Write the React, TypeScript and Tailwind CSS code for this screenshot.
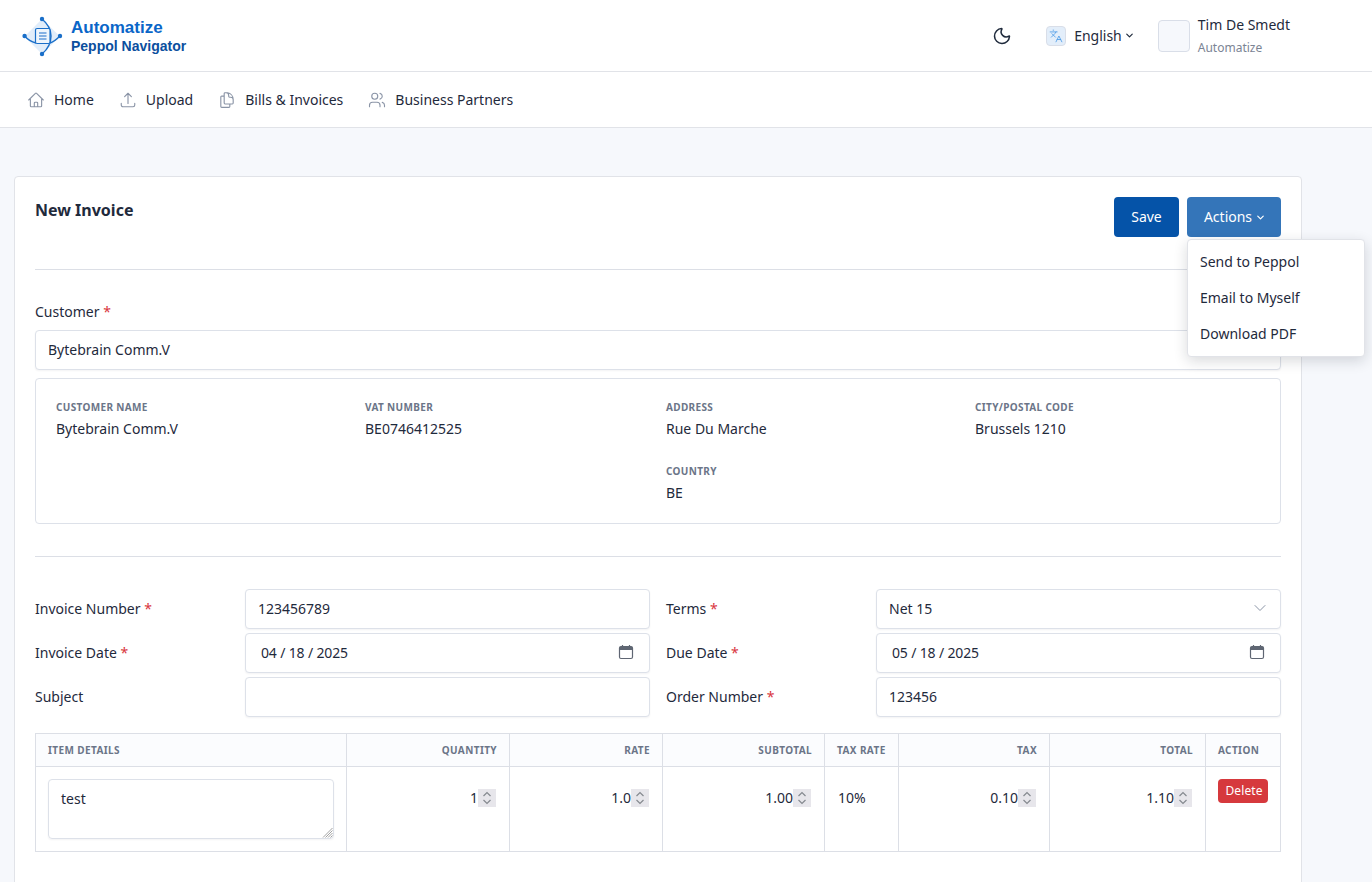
import { Languages, Moon, ChevronDown, Users } from "lucide-react";
import { HiOutlineArrowUpTray, HiOutlineDocumentDuplicate, HiOutlineHome } from "react-icons/hi2";

const field =
  "w-full h-10 px-3 bg-white border border-[#dde1e9] rounded text-sm text-[#1f2a3c] shadow-[0_1px_2px_rgba(16,24,40,0.05)] outline-none";

function Logo() {
  return (
    <svg width="44" height="44" viewBox="0 0 44 44" fill="none">
      <path d="M19 7 Q21 5 23 7 L37 20.5 Q39 22.5 37 24.5 L23 38 Q21 40 19 38 L5.5 24.5 Q3.5 22.5 5.5 20.5 Z" fill="#e1edfa" />
      <path d="M21 5 C27 10 30 16 30 22 C30 29 27 35 21 40" stroke="#1a6fc9" strokeWidth="1.4" />
      <path d="M3.6 22 C7 26 11 28 15 29 M39 22 C35 26 33 28 29 29" stroke="#1a6fc9" strokeWidth="1.4" />
      <rect x="14.5" y="14.5" width="14.5" height="15" rx="1.5" fill="#eef5fc" stroke="#1a6fc9" strokeWidth="1.2" />
      <path d="M18 19h7.5M18 22h7.5M18 25h7.5" stroke="#1a6fc9" strokeWidth="1.2" />
      <circle cx="21" cy="5" r="2.2" fill="#1a6fc9" />
      <circle cx="3.6" cy="22" r="2.2" fill="#1a6fc9" />
      <circle cx="39" cy="22" r="2.2" fill="#1a6fc9" />
      <circle cx="21" cy="40" r="2.2" fill="#1a6fc9" />
    </svg>
  );
}

function CalendarIcon() {
  return (
    <svg width="16" height="16" viewBox="0 0 16 16" fill="none" className="absolute right-[16px] top-[11px]">
      <rect x="1.5" y="2.5" width="13" height="12" rx="1.5" stroke="#5f6673" strokeWidth="1.2" />
      <path d="M1.5 4a1.5 1.5 0 0 1 1.5-1.5h10A1.5 1.5 0 0 1 14.5 4v2h-13Z" fill="#5f6673" />
      <path d="M4.5 1v2M11.5 1v2" stroke="#5f6673" strokeWidth="1.2" />
    </svg>
  );
}

function NavItem({ icon, label }: { icon: React.ReactNode; label: string }) {
  return (
    <a className="flex items-center gap-[9px] text-sm text-[#1f2a3c]">
      <span className="text-[#8a94a6]">{icon}</span>
      {label}
    </a>
  );
}

function Req() {
  return <span className="text-[#d9363e]"> *</span>;
}

function Info({ label, value }: { label: string; value: string }) {
  return (
    <div>
      <div className="text-[10px] leading-[14px] font-bold uppercase tracking-[0.35px] text-[#6b7588]">{label}</div>
      <div className="mt-[5px] text-sm leading-5 text-[#1f2a3c]">{value}</div>
    </div>
  );
}

function FormRow({ label, required, children }: { label: string; required?: boolean; children: React.ReactNode }) {
  return (
    <div className="grid grid-cols-[210px_405px] items-center">
      <label className="text-sm text-[#1f2a3c]">
        {label}
        {required && <Req />}
      </label>
      {children}
    </div>
  );
}

function NumberCell({ value }: { value: string }) {
  return (
    <td className="border border-[#dcdfe6] pl-3 pr-[13px] pt-[22px] align-top">
      <div className="flex items-center h-[18px]">
        <input
          readOnly
          value={value}
          className="min-w-0 flex-1 h-5 text-right text-sm text-[#1f2a3c] bg-transparent outline-none"
        />
        <span className="w-[18px] h-[18px] shrink-0 bg-[#e7e6eb] flex items-center justify-center">
          <svg width="12" height="14" viewBox="0 0 12 14" fill="none" stroke="#85898f" strokeWidth="1.2">
            <path d="M2.5 5 L6 1.5 L9.5 5 M2.5 9 L6 12.5 L9.5 9" />
          </svg>
        </span>
      </div>
    </td>
  );
}

const th = "border border-[#dcdfe6] px-3 h-[33px] text-[10px] font-bold uppercase tracking-[0.4px] text-[#6b7588]";
const input = `${field} pb-0.5`;

export default function App() {
  return (
    <div className="h-screen overflow-hidden bg-[#f6f8fc] font-['Noto_Sans',sans-serif]">
      <header className="h-[72px] bg-white border-b border-[#e1e3e8] flex items-center pl-[21px] pr-[82px]">
        <Logo />
        <div className="ml-[6px] mt-[2px] font-['Liberation_Sans',sans-serif] font-bold">
          <div className="text-[17px] leading-5 text-[#0a66c8]">Automatize</div>
          <div className="text-sm leading-[17px] text-[#0b4f9e]">Peppol Navigator</div>
        </div>
        <Moon size={20} strokeWidth={1.8} className="ml-auto text-[#1f2a3c]" />
        <span className="ml-[34px] w-5 h-5 rounded bg-[#e3eefa] border border-[#d9dee8] flex items-center justify-center text-[#4a9ae8]">
          <Languages size={14} strokeWidth={1.4} />
        </span>
        <span className="ml-[8px] text-sm text-[#1f2a3c]">English</span>
        <ChevronDown size={11} strokeWidth={2.6} className="ml-[2px] text-[#1f2a3c]" />
        <span className="ml-[23px] w-8 h-8 rounded bg-[#f6f8fc] border border-[#d9dee8]" />
        <div className="ml-2">
          <div className="text-sm leading-[19px] text-[#1f2a3c]">Tim De Smedt</div>
          <div className="mt-[5px] text-xs leading-[17px] text-[#7b8494]">Automatize</div>
        </div>
      </header>

      <nav className="h-[56px] bg-white border-b border-[#e1e3e8] flex items-center pl-[27px] gap-[25px]">
        <NavItem icon={<HiOutlineHome size={18} strokeWidth={1.5} />} label="Home" />
        <NavItem icon={<HiOutlineArrowUpTray size={18} strokeWidth={1.5} />} label="Upload" />
        <NavItem icon={<HiOutlineDocumentDuplicate size={18} strokeWidth={1.5} />} label="Bills & Invoices" />
        <NavItem icon={<Users size={18} strokeWidth={1.5} />} label="Business Partners" />
      </nav>

      <main className="pt-12 pl-[14px]">
        <section className="relative w-[1288px] bg-white border border-[#e1e3e8] rounded px-5 pt-5 pb-10">
          <div className="flex justify-between h-[40px]">
            <h1 className="text-base leading-[26px] font-bold text-[#1f2a3c]">New Invoice</h1>
            <div className="flex gap-2">
              <button className="w-[65px] h-10 rounded bg-[#0553a8] text-sm text-white">Save</button>
              <button className="w-[94px] h-10 pl-[2px] rounded bg-[#3475b9] text-sm text-white flex items-center justify-center gap-[3px]">
                Actions <ChevronDown size={11} strokeWidth={2.6} />
              </button>
            </div>
          </div>

          <div className="absolute z-10 left-[1172px] top-[62px] w-[178px] h-[118px] py-1 bg-white border border-[#e1e3e8] rounded shadow-[0_4px_14px_rgba(16,24,40,0.16)]">
            <div className="h-9 pl-3 flex items-center text-sm text-[#1f2a3c]">Send to Peppol</div>
            <div className="h-9 pl-3 flex items-center text-sm text-[#1f2a3c]">Email to Myself</div>
            <div className="h-9 pl-3 flex items-center text-sm text-[#1f2a3c]">Download PDF</div>
          </div>

          <hr className="mt-8 border-[#dcdfe6]" />

          <label className="block mt-[32px] mb-[8px] text-sm leading-5 text-[#1f2a3c]">
            Customer
            <Req />
          </label>
          <input readOnly value="Bytebrain Comm.V" className={input} />

          <div className="mt-2 h-[146px] border border-[#dde1e9] rounded px-5 pt-[21px] grid grid-cols-[309px_301px_309px_1fr] auto-rows-[64px]">
            <Info label="Customer Name" value="Bytebrain Comm.V" />
            <Info label="VAT Number" value="BE0746412525" />
            <Info label="Address" value="Rue Du Marche" />
            <Info label="City/Postal Code" value="Brussels 1210" />
            <div className="col-start-3">
              <Info label="Country" value="BE" />
            </div>
          </div>

          <hr className="mt-8 border-[#dcdfe6]" />

          <div className="mt-8 grid grid-cols-[615px_615px] gap-x-4 gap-y-1">
            <FormRow label="Invoice Number" required>
              <input readOnly value="123456789" className={input} />
            </FormRow>
            <FormRow label="Terms" required>
              <div className="relative">
                <select defaultValue="Net 15" className={`${field} appearance-none`}>
                  <option>Net 15</option>
                </select>
                <ChevronDown size={20} strokeWidth={1.2} className="absolute right-[11px] top-[9px] text-[#8a94a6]" />
              </div>
            </FormRow>
            <FormRow label="Invoice Date" required>
              <div className="relative">
                <input readOnly value="04 / 18 / 2025" className={`${input} pl-[15px] tracking-[-0.15px]`} />
                <CalendarIcon />
              </div>
            </FormRow>
            <FormRow label="Due Date" required>
              <div className="relative">
                <input readOnly value="05 / 18 / 2025" className={`${input} pl-[15px] tracking-[-0.15px]`} />
                <CalendarIcon />
              </div>
            </FormRow>
            <FormRow label="Subject">
              <input readOnly value="" className={input} />
            </FormRow>
            <FormRow label="Order Number" required>
              <input readOnly value="123456" className={input} />
            </FormRow>
          </div>

          <table className="mt-4 w-[1245px] table-fixed border-collapse">
            <colgroup>
              <col className="w-[311px]" />
              <col className="w-[163px]" />
              <col className="w-[153px]" />
              <col className="w-[162px]" />
              <col className="w-[74px]" />
              <col className="w-[151px]" />
              <col className="w-[156px]" />
              <col className="w-[75px]" />
            </colgroup>
            <thead className="bg-[#fbfcfe]">
              <tr>
                <th className={`${th} text-left`}>Item Details</th>
                <th className={`${th} text-right`}>Quantity</th>
                <th className={`${th} text-right`}>Rate</th>
                <th className={`${th} text-right`}>Subtotal</th>
                <th className={`${th} text-left`}>Tax Rate</th>
                <th className={`${th} text-right`}>Tax</th>
                <th className={`${th} text-right`}>Total</th>
                <th className={`${th} text-left`}>Action</th>
              </tr>
            </thead>
            <tbody>
              <tr className="h-[85px]">
                <td className="border border-[#dcdfe6] px-3 pt-3 pb-3 align-top">
                  <div className="relative">
                    <textarea
                      defaultValue="test"
                      className="block w-full h-[60px] px-3 py-[9px] text-sm leading-5 text-[#1f2a3c] border border-[#dde1e9] rounded shadow-[0_1px_2px_rgba(16,24,40,0.05)] outline-none resize-none"
                    />
                    <svg width="11" height="11" viewBox="0 0 11 11" stroke="#8a8a8a" strokeWidth="0.8" className="absolute right-[1px] bottom-[1px] pointer-events-none">
                      <path d="M1 10.5 L10.5 1 M3.5 10.5 L10.5 3.5 M6 10.5 L10.5 6 M8.5 10.5 L10.5 8.5" />
                    </svg>
                  </div>
                </td>
                <NumberCell value="1" />
                <NumberCell value="1.0" />
                <NumberCell value="1.00" />
                <td className="border border-[#dcdfe6] px-[13px] pt-[21px] align-top text-sm leading-5 text-[#1f2a3c]">10%</td>
                <NumberCell value="0.10" />
                <NumberCell value="1.10" />
                <td className="border border-[#dcdfe6] px-3 pt-3 align-top">
                  <button className="block w-[50px] h-6 pl-[2px] rounded-sm bg-[#d6393d] text-xs tracking-[0.1px] text-white">Delete</button>
                </td>
              </tr>
            </tbody>
          </table>
        </section>
      </main>
    </div>
  );
}
